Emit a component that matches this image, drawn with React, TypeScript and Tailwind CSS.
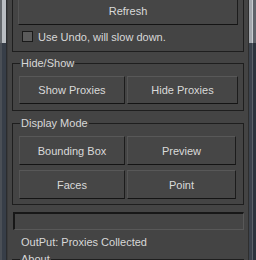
import React from "react";

function Btn({ label, h }: { label: string; h: string }) {
  return (
    <div
      className={`flex items-center justify-center ${h} bg-[#464646] border border-t-[#585858] border-l-[#545454] border-r-[#1c1c1c] border-b-[#141414] text-[#dadada]`}
    >
      {label}
    </div>
  );
}

function Strip({ top, bottom, w }: { top: string; bottom: string; w: string }) {
  return (
    <div className={`flex flex-col ${w}`}>
      <div className={`h-[43px] ${top}`} />
      <div className={`flex-1 ${bottom}`} />
    </div>
  );
}

export default function App() {
  return (
    <div className="flex w-[256px] h-[260px] overflow-hidden bg-[#444444] font-['Liberation_Sans',Arial,sans-serif] text-[11px] leading-[12px] text-[#d8d8d8]">
      {/* left edge */}
      <Strip w="w-[2px]" top="bg-[#64686d]" bottom="bg-[#4a4f56]" />
      <Strip w="w-[4px]" top="bg-[#b9bdc2]" bottom="bg-[#373e48]" />
      <div className="w-[1px] bg-[#2a2c2f]" />
      <div className="w-[1px] bg-[#3b3b3b]" />

      {/* panel */}
      <div className="flex flex-col w-[240px] overflow-hidden">
        <div className="-mt-[9px] mx-[4px] border border-[#1e1e1e] px-[5px] pt-[5px] pb-[9px]">
          <Btn label="Refresh" h="h-[28px]" />
          <div className="mt-[6px] flex items-center h-[11px]">
            <div className="ml-[4px] w-[11px] h-[11px] border border-[#1a1a1a] bg-[#5b5b5b]" />
            <span className="ml-[5px]">Use Undo, will slow down.</span>
          </div>
        </div>

        <fieldset className="mt-[5px] mx-[4px] border border-[#1e1e1e] pl-[6px] pr-[5px] pt-[7px] pb-[6px]">
          <legend className="ml-[1px] px-[1px] leading-[12px]">Hide/Show</legend>
          <div className="grid grid-cols-[106px_1fr] gap-x-[2px]">
            <Btn label="Show Proxies" h="h-[28px]" />
            <Btn label="Hide Proxies" h="h-[28px]" />
          </div>
        </fieldset>

        <fieldset className="mt-[6px] mx-[4px] border border-[#1e1e1e] pl-[6px] pr-[7px] pt-[7px] pb-[5px]">
          <legend className="ml-[1px] px-[1px] leading-[12px]">Display Mode</legend>
          <div className="grid grid-cols-[106px_1fr] gap-x-[2px] gap-y-[5px]">
            <Btn label="Bounding Box" h="h-[29px]" />
            <Btn label="Preview" h="h-[29px]" />
            <Btn label="Faces" h="h-[29px]" />
            <Btn label="Point" h="h-[29px]" />
          </div>
        </fieldset>

        <div className="mt-[7px] ml-[5px] mr-[4px] h-[18px] shrink-0 bg-[#454545] border-t-2 border-l-2 border-r border-b border-t-[#171717] border-l-[#171717] border-r-[#585858] border-b-[#585858]" />

        <div className="mt-[6px] ml-[13px] shrink-0">OutPut: Proxies Collected</div>

        <fieldset className="mt-[5px] mx-[4px] shrink-0 border border-[#1e1e1e] pl-[6px] pt-[20px]">
          <legend className="ml-[1px] px-[1px] leading-[12px]">About</legend>
        </fieldset>
      </div>

      {/* right scrollbar */}
      <div className="w-[1px] bg-[#2e2e2e]" />
      <Strip w="w-[3px]" top="bg-[#a4a8ae]" bottom="bg-[#3c434d]" />
      <Strip w="w-[1px]" top="bg-[#c8ccd0]" bottom="bg-[#5b6169]" />
      <Strip w="w-[3px]" top="bg-[#5e6269]" bottom="bg-[#2c333d]" />
    </div>
  );
}
